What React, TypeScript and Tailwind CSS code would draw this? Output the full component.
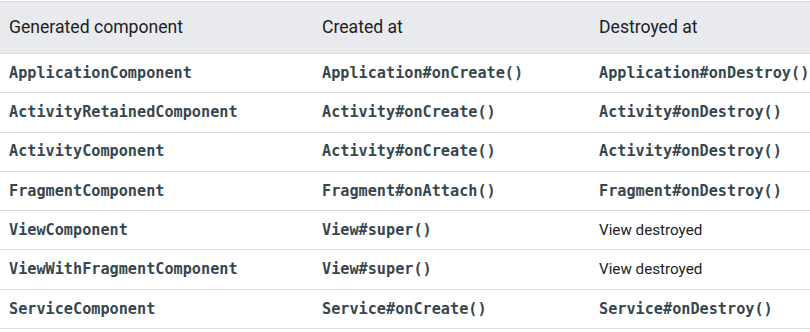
const rows: [string, string, string, boolean][] = [
  ['ApplicationComponent', 'Application#onCreate()', 'Application#onDestroy()', true],
  ['ActivityRetainedComponent', 'Activity#onCreate()', 'Activity#onDestroy()', true],
  ['ActivityComponent', 'Activity#onCreate()', 'Activity#onDestroy()', true],
  ['FragmentComponent', 'Fragment#onAttach()', 'Fragment#onDestroy()', true],
  ['ViewComponent', 'View#super()', 'View destroyed', false],
  ['ViewWithFragmentComponent', 'View#super()', 'View destroyed', false],
  ['ServiceComponent', 'Service#onCreate()', 'Service#onDestroy()', true],
]

const code = "font-['DejaVu_Sans_Mono',monospace] font-bold text-[15.2px] text-[#37474f]"

export default function App() {
  return (
    <div className="w-[810px] h-[332px] overflow-hidden bg-white pt-px font-['Roboto',sans-serif]">
      <table className="w-[830px] table-fixed border-collapse">
        <colgroup>
          <col className="w-[313px]" />
          <col className="w-[277px]" />
          <col />
        </colgroup>
        <thead>
          <tr className="h-[52px] bg-[#e8eaed] border-y border-[#dadce0] text-left text-[17.6px] text-[#202124]">
            <th className="pl-[9px] font-normal">Generated component</th>
            <th className="pl-[9px] font-normal">Created at</th>
            <th className="pl-[9px] font-normal">Destroyed at</th>
          </tr>
        </thead>
        <tbody>
          {rows.map(([name, created, destroyed, destroyedCode]) => (
            <tr key={name} className="h-[39.3px] border-b border-[#dadce0] whitespace-nowrap">
              <td className={`pl-[9px] ${code}`}>{name}</td>
              <td className={`pl-[9px] ${code}`}>{created}</td>
              <td className={destroyedCode ? `pl-[9px] ${code}` : 'pl-[9px] text-[15.2px] text-[#202124]'}>
                {destroyed}
              </td>
            </tr>
          ))}
        </tbody>
      </table>
    </div>
  )
}
